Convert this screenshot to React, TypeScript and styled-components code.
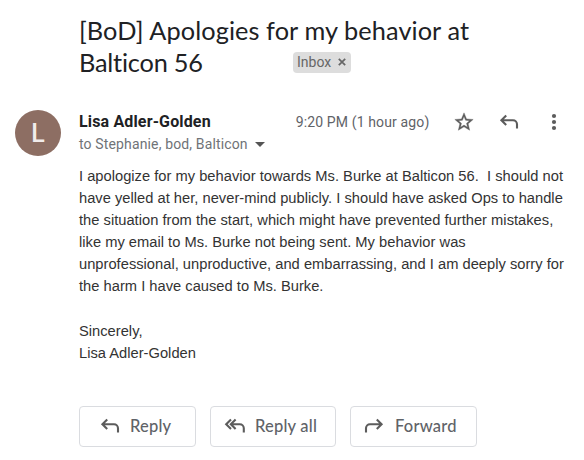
import React from 'react';
import styled, { createGlobalStyle } from 'styled-components';

const GlobalStyle = createGlobalStyle`
  * { box-sizing: border-box; }
  body { margin: 0; background: #fff; }
`;

const Page = styled.main`
  width: 584px;
  height: 460px;
  padding: 14px 0 0 15px;
  overflow: hidden;
  background: #fff;
  font-family: Roboto, sans-serif;
`;

const Subject = styled.header`
  padding-left: 64px;
  height: 96px;
`;

const SubjectLine = styled.div`
  display: flex;
  align-items: center;
  height: 32px;
`;

const Title = styled.span<{ $spacing: number }>`
  font: 400 25.3px/32px Lato, sans-serif;
  font-variant-ligatures: none;
  letter-spacing: ${(p) => p.$spacing}px;
  color: #202124;
  white-space: pre;
`;

const InboxLabel = styled.span`
  display: flex;
  align-items: center;
  gap: 7px;
  height: 21px;
  width: 58px;
  margin-left: auto;
  margin-right: 233px;
  padding-left: 4px;
  border-radius: 4px;
  background: #ddd;
  color: #666;
  font-size: 14px;
  line-height: 21px;
`;

const Message = styled.article`
  display: grid;
  grid-template-columns: 64px 1fr;
`;

const Avatar = styled.div`
  width: 46px;
  height: 46px;
  border-radius: 50%;
  background: #8d6e63;
  color: #f1eceb;
  font: 500 25px/47px Roboto, sans-serif;
  text-align: center;
`;

const Head = styled.div`
  display: flex;
  justify-content: space-between;
  height: 23px;
`;

const Sender = styled.span`
  font-size: 16px;
  font-weight: 700;
  line-height: 24px;
  letter-spacing: 0.15px;
  color: #202124;
`;

const Meta = styled.div`
  display: flex;
  align-items: center;
  color: #5f6368;
`;

const Time = styled.time`
  font-size: 14px;
  letter-spacing: 0.13px;
  margin-right: 24px;
  white-space: nowrap;
`;

const IconSlot = styled.span<{ $gap?: number }>`
  display: flex;
  margin-right: ${(p) => p.$gap ?? 0}px;
`;

const Recipients = styled.div`
  display: flex;
  align-items: center;
  gap: 7px;
  height: 22px;
  color: #6f7377;
  font-size: 14px;
  letter-spacing: 0.14px;
`;

const Body = styled.div`
  margin-top: 10px;
  font: 400 14.7px/22.1px "Liberation Sans", Arial, sans-serif;
  letter-spacing: 0.01px;
  color: #333;
  white-space: pre;
`;

const Paragraph = styled.p`
  margin: 0 0 22px;
`;

const Actions = styled.div`
  display: flex;
  gap: 14px;
  margin-top: 42px;
`;

const ActionButton = styled.button<{ $width: number; $inset: number; $gap: number }>`
  display: flex;
  align-items: center;
  gap: ${(p) => p.$gap}px;
  width: ${(p) => p.$width}px;
  height: 41px;
  padding: 0 0 0 ${(p) => p.$inset}px;
  border: 1px solid #dadce0;
  border-radius: 4px;
  background: #fff;
  color: #5f6368;
  font: 500 16.5px/38px Lato, sans-serif;
  letter-spacing: 0.2px;
  white-space: nowrap;
`;

const ArrowSvg = styled.svg`
  flex: none;
`;

const stroke = { fill: 'none', stroke: '#5c5c5c', strokeWidth: 2.1 };

const ReplyIcon = () => (
  <ArrowSvg width="20" height="18" viewBox="0 0 20 18" {...stroke}>
    <path d="M7.2 2.4 2.4 7.2l4.8 4.8M2.6 7.2H14a4 4 0 0 1 4 4v4.2" />
  </ArrowSvg>
);

const ReplyAllIcon = () => (
  <ArrowSvg width="22" height="18" viewBox="0 0 22 18" {...stroke}>
    <path d="M7 2.4 2.2 7.2 7 12M11.6 2.4 6.8 7.2l4.8 4.8M7 7.2h8.8a4 4 0 0 1 4 4v4.2" />
  </ArrowSvg>
);

const ForwardIcon = () => (
  <ArrowSvg width="20" height="18" viewBox="0 0 20 18" {...stroke}>
    <path d="M12.8 2.4l4.8 4.8-4.8 4.8M17.4 7.2H6a4 4 0 0 0-4 4v4.2" />
  </ArrowSvg>
);

export default function App() {
  return (
    <>
      <GlobalStyle />
      <Page>
        <Subject>
          <SubjectLine>
            <Title $spacing={0.09}>[BoD] Apologies for my behavior at</Title>
          </SubjectLine>
          <SubjectLine>
            <Title $spacing={-0.2}>Balticon 56</Title>
            <InboxLabel>
              Inbox
              <svg width="8" height="8" viewBox="0 0 8 8" fill="none" stroke="#666" strokeWidth="1.7">
                <path d="M.8.8l6.4 6.4M7.2.8.8 7.2" />
              </svg>
            </InboxLabel>
          </SubjectLine>
        </Subject>
        <Message>
          <Avatar>L</Avatar>
          <div>
            <Head>
              <Sender>Lisa Adler-Golden</Sender>
              <Meta>
                <Time>9:20 PM (1 hour ago)</Time>
                <IconSlot $gap={24}>
                  <svg width="22" height="22" viewBox="0 0 24 24" fill="#5c5c5c" stroke="#5c5c5c" strokeWidth="0.4">
                    <path d="M22 9.24l-7.19-.62L12 2 9.19 8.63 2 9.24l5.46 4.73L5.82 21 12 17.27 18.18 21l-1.63-7.03L22 9.24zM12 15.4l-3.76 2.27 1-4.28-3.32-2.88 4.38-.38L12 6.1l1.71 4.04 4.38.38-3.32 2.88 1 4.28L12 15.4z" />
                  </svg>
                </IconSlot>
                <IconSlot $gap={32}>
                  <ReplyIcon />
                </IconSlot>
                <IconSlot $gap={26.6}>
                  <svg width="6" height="18" viewBox="0 0 6 18" fill="#5c5c5c">
                    <circle cx="3" cy="3" r="2.1" />
                    <circle cx="3" cy="9" r="2.1" />
                    <circle cx="3" cy="15" r="2.1" />
                  </svg>
                </IconSlot>
              </Meta>
            </Head>
            <Recipients>
              to Stephanie, bod, Balticon
              <svg width="10" height="5" viewBox="0 0 10 5" fill="#555">
                <path d="M0 0h10L5 5z" />
              </svg>
            </Recipients>
            <Body>
              <Paragraph>
                {'I apologize for my behavior towards Ms. Burke at Balticon 56.  I should not\n'}
                {'have yelled at her, never-mind publicly. I should have asked Ops to handle\n'}
                {'the situation from the start, which might have prevented further mistakes,\n'}
                {'like my email to Ms. Burke not being sent. My behavior was\n'}
                {'unprofessional, unproductive, and embarrassing, and I am deeply sorry for\n'}
                {'the harm I have caused to Ms. Burke.'}
              </Paragraph>
              {'Sincerely,\nLisa Adler-Golden'}
            </Body>
            <Actions>
              <ActionButton $width={117} $inset={20} $gap={10}>
                <ReplyIcon />
                Reply
              </ActionButton>
              <ActionButton $width={126} $inset={13} $gap={9}>
                <ReplyAllIcon />
                Reply all
              </ActionButton>
              <ActionButton $width={127} $inset={13} $gap={11}>
                <ForwardIcon />
                Forward
              </ActionButton>
            </Actions>
          </div>
        </Message>
      </Page>
    </>
  );
}
